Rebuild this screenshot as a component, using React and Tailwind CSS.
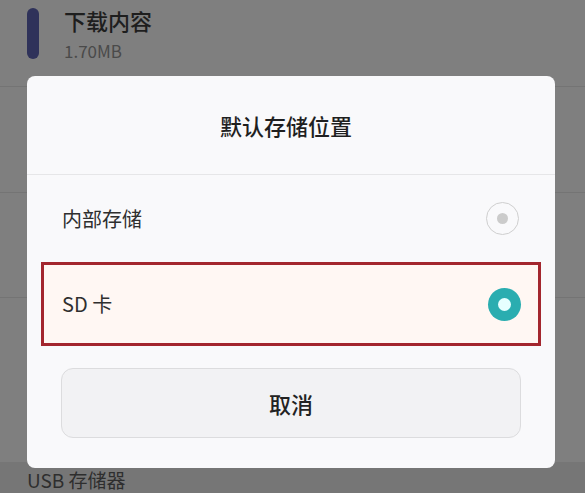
export default function App() {
  const font = { fontFamily: '"Noto Sans CJK SC", "Noto Sans", sans-serif' };
  return (
    <div className="relative w-[585px] h-[493px] overflow-hidden bg-[#7f7f7f]" style={font}>
      {/* background list */}
      <div className="flex flex-col">
        <div className="h-[87px] flex items-start pl-[27px] pt-[8px] gap-[25px] border-b border-[#747474]">
          <div className="w-[12px] h-[51px] rounded-full bg-[#2f325a]" />
          <div className="flex flex-col">
            <span className="text-[22px] leading-[28px] font-medium text-[#1e1e1e] mt-[-2px]">下载内容</span>
            <span className="text-[17px] leading-[20px] text-[#4a4a4a] mt-[7px]">1.70MB</span>
          </div>
        </div>
        <div className="h-[106px] border-b border-[#747474]" />
        <div className="h-[105px] border-b border-[#747474]" />
        <div className="h-[164px]" />
        <div className="h-[31px] bg-[#767676] pl-[27px] flex items-end">
          <span className="text-[19px] leading-[26px] text-[#2e2e2e]">USB 存储器</span>
        </div>
      </div>

      {/* dialog */}
      <div className="absolute left-[27px] top-[76px] w-[528px] h-[392px] rounded-[8px] bg-[#f9f9fb] flex flex-col">
        <div className="h-[99px] flex items-center justify-center pr-[10px] border-b border-[#e6e6e8]">
          <span className="text-[22px] font-medium text-[#1f1f1f]">默认存储位置</span>
        </div>
        <div className="h-[87px] flex items-center justify-between pl-[35px] pr-[36px]">
          <span className="text-[20px] text-[#2f2f2f]">内部存储</span>
          <div className="w-[33px] h-[33px] rounded-full border-[1.5px] border-[#cfcfcf] flex items-center justify-center">
            <div className="w-[11px] h-[11px] rounded-full bg-[#cbcbcb]" />
          </div>
        </div>
        <div className="mx-[14px] h-[84px] border-[3px] border-[#a3262e] bg-[#fff7f3] flex items-center justify-between pl-[18px] pr-[17px]">
          <span className="text-[20px] text-[#2f2f2f]">SD 卡</span>
          <div className="w-[33px] h-[33px] rounded-full bg-[#2aadb0] flex items-center justify-center">
            <div className="w-[13px] h-[13px] rounded-full bg-[#e6ffff]" />
          </div>
        </div>
        <div className="mt-[22px] mx-[34px] h-[70px] rounded-[12px] border border-[#dcdcde] bg-[#f2f2f4] flex items-center justify-center">
          <span className="text-[22px] font-medium text-[#222]">取消</span>
        </div>
      </div>
    </div>
  );
}
